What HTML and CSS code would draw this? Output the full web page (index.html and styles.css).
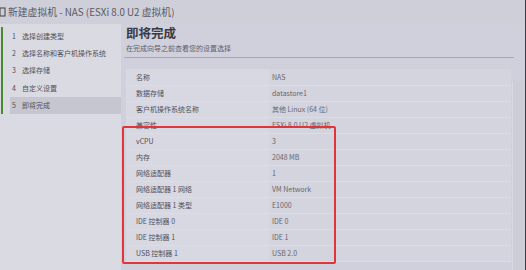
FILE: index.html
```html
<!DOCTYPE html>
<html lang="zh">
<head>
<meta charset="utf-8">
<link rel="stylesheet" href="styles.css">
</head>
<body>
<div class="app">
  <div class="titlebar">
    <svg class="ticon" width="6" height="10" viewBox="0 0 6 10"><rect x="0" y="1" width="5" height="8" fill="none" stroke="#555" stroke-width="1.2"/></svg>
    <span>新建虚拟机 - NAS (ESXi 8.0 U2 虚拟机)</span>
  </div>
  <div class="body">
    <aside class="side">
      <ol class="steps">
        <li><span class="n">1</span>选择创建类型</li>
        <li><span class="n">2</span>选择名称和客户机操作系统</li>
        <li><span class="n">3</span>选择存储</li>
        <li><span class="n">4</span>自定义设置</li>
        <li class="active"><span class="n">5</span>即将完成</li>
      </ol>
    </aside>
    <main class="main">
      <h1>即将完成</h1>
      <p class="sub">在完成向导之前查看您的设置选择</p>
      <div class="rule"></div>
      <div class="tablewrap">
        <table class="sum">
          <tr><td>名称</td><td>NAS</td><td></td></tr>
          <tr><td>数据存储</td><td>datastore1</td><td></td></tr>
          <tr><td>客户机操作系统名称</td><td>其他 Linux (64 位)</td><td></td></tr>
          <tr><td>兼容性</td><td>ESXi 8.0 U2 虚拟机</td><td></td></tr>
          <tr><td>vCPU</td><td>3</td><td></td></tr>
          <tr><td>内存</td><td>2048 MB</td><td></td></tr>
          <tr><td>网络适配器</td><td>1</td><td></td></tr>
          <tr><td>网络适配器 1 网络</td><td>VM Network</td><td></td></tr>
          <tr><td>网络适配器 1 类型</td><td>E1000</td><td></td></tr>
          <tr><td>IDE 控制器 0</td><td>IDE 0</td><td></td></tr>
          <tr><td>IDE 控制器 1</td><td>IDE 1</td><td></td></tr>
          <tr><td>USB 控制器 1</td><td>USB 2.0</td><td></td></tr>
        </table>
        <div class="highlight"></div>
      </div>
    </main>
    <div class="scroll"></div>
  </div>
</div>
</body>
</html>
```
FILE: styles.css
```css
* { box-sizing: border-box; }
html, body { margin: 0; padding: 0; }
body {
  width: 526px; height: 270px; overflow: hidden;
  background: #d0d0dc;
  font-family: "Noto Sans CJK SC", "Noto Sans", sans-serif;
  color: #555;
  border-right: 1px solid #3a3a44;
}
.app { display: flex; flex-direction: column; height: 270px; }
.titlebar {
  height: 24px; display: flex; align-items: center; gap: 2px;
  font-size: 9.8px; color: #5a5a62;
  background: #cfcfda;
}
.body { flex: 1; display: flex; }
.side {
  width: 121px; background: #dadae3; padding-top: 3px;
}
.steps {
  list-style: none; margin: 0; padding: 0 0 0 7px;
  border-left: 2px solid #4a8a2c; margin-left: 1px;
  font-size: 7px; color: #50505a;
}
.steps li { height: 17.4px; display: flex; align-items: center; }
.steps .n { width: 10px; padding-left: 2px; margin-right: 2px; }
.steps li.active { background: #c6c6d0; }
.main { width: 391px; padding: 0 0 0 5px; }
.main h1 { margin: 0; font-size: 12.5px; font-weight: 700; color: #3a3a44; line-height: 18px; }
.sub { margin: 1px 0 0; font-size: 7px; color: #60606a; line-height: 10px; }
.rule { height: 1px; background: #a6a6b4; margin: 4px 0 0 -2px; width: 390px; }
.tablewrap { position: relative; margin-top: 11px; }
.sum { border-collapse: collapse; width: 385px; font-size: 7px; }
.sum td { height: 16px; padding: 0; border-bottom: 1px solid #dcdce5; background: #d4d4de; color: #5a5a64; }
.sum td:first-child { width: 143px; padding-left: 10px; background: #d8d8e2; color: #50505a; }
.sum td:nth-child(2) { width: 66px; padding-left: 3px; color: #66666e; }
.highlight {
  position: absolute; left: -4px; top: 57px; width: 214px; height: 138px;
  border: 2px solid #e0363a; border-radius: 2px;
}
.scroll { width: 12px; background: #cdcdd8; border-left: 1px solid #d8d8e2; margin-top: 57px; }
```
